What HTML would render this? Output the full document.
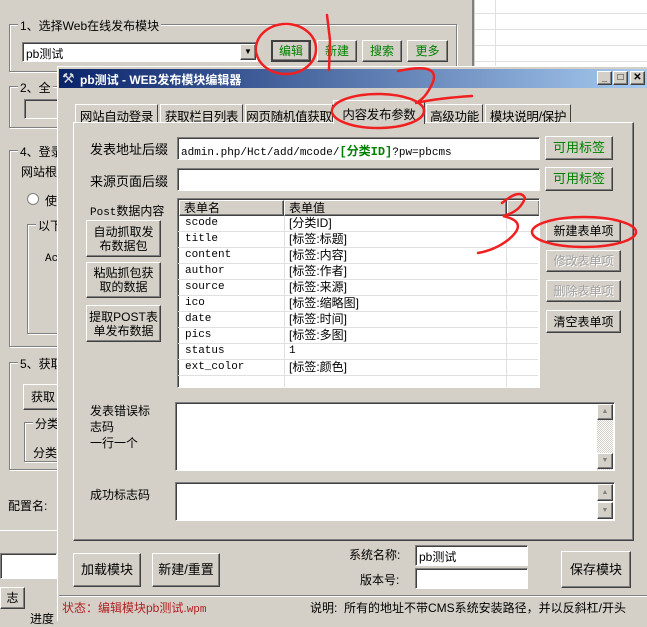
<!DOCTYPE html>
<html><head><meta charset="utf-8"><style>
*{box-sizing:border-box;margin:0;padding:0}
body{width:647px;height:621px;background:#d4d0c8;position:relative;overflow:hidden;font-family:"Liberation Sans","Noto Sans CJK SC","WenQuanYi Zen Hei",sans-serif;font-size:12px;color:#000}
.a{position:absolute;white-space:nowrap}
.gb{position:absolute;border:1px solid #808080;box-shadow:1px 1px 0 #fff, inset 1px 1px 0 #fff}
.gl{position:absolute;background:#d4d0c8;padding:0 2px;top:-8px;left:8px;font-size:12px;white-space:nowrap}
.btn{position:absolute;background:#d4d0c8;border:1px solid;border-color:#fff #404040 #404040 #fff;box-shadow:inset -1px -1px 0 #808080;text-align:center;display:flex;align-items:center;justify-content:center;line-height:14px;white-space:nowrap}
.inp{position:absolute;background:#fff;border:1px solid;border-color:#808080 #fff #fff #808080;box-shadow:inset 1px 1px 0 #404040}
.g{color:#008000}
.dis{color:#a0a0a0;text-shadow:1px 1px 0 #fff}
.mono{font-family:"Liberation Mono","Noto Sans CJK SC",monospace;font-size:11px}
.tab{position:absolute;top:104px;height:19px;border:1px solid;border-color:#fff #404040 transparent #fff;border-bottom:none;padding:1px 0 0;font-size:12.5px;white-space:nowrap;overflow:hidden;text-align:center;letter-spacing:-0.3px}
.row{position:absolute;left:0;width:360px;height:16px;border-bottom:1px solid #e0e0e0}
.row span{position:absolute;top:0;line-height:15px}
</style></head><body>
<!-- background window -->
<div class="a" style="left:475px;top:0;width:172px;height:75px;background:#fff"></div>
<div class="a" style="left:472px;top:0;width:2px;height:80px;background:#808080"></div>
<div class="a" style="left:495px;top:0;width:1px;height:75px;background:#e0e0e0"></div>
<div class="a" style="left:475px;top:13px;width:172px;height:1px;background:#e0e0e0"></div>
<div class="a" style="left:475px;top:29px;width:172px;height:1px;background:#e0e0e0"></div>
<div class="a" style="left:475px;top:45px;width:172px;height:1px;background:#e0e0e0"></div>
<div class="a" style="left:475px;top:61px;width:172px;height:1px;background:#e0e0e0"></div>
<div class="gb" style="left:9px;top:24px;width:448px;height:48px"><span class="gl">1、选择Web在线发布模块</span></div>
<div class="inp" style="left:22px;top:42px;width:236px;height:20px"><span class="a" style="left:3px;top:2px">pb测试</span><div class="btn" style="right:1px;top:1px;width:16px;height:16px;font-size:8px">▼</div></div>
<div class="btn g" style="left:271px;top:40px;width:40px;height:22px;border:2px solid #404040">编辑</div>
<div class="btn g" style="left:317px;top:40px;width:40px;height:22px">新建</div>
<div class="btn g" style="left:362px;top:40px;width:40px;height:22px">搜索</div>
<div class="btn g" style="left:407px;top:40px;width:41px;height:22px">更多</div>
<div class="gb" style="left:9px;top:86px;width:60px;height:42px"><span class="gl">2、全</span></div>
<div class="inp" style="left:24px;top:99px;width:40px;height:20px;background:#d4d0c8"></div>
<div class="gb" style="left:9px;top:150px;width:60px;height:197px"><span class="gl">4、登录</span></div>
<div class="a" style="left:21px;top:163px">网站根</div>
<div class="a" style="left:27px;top:193px;width:12px;height:12px;border-radius:50%;background:#fff;border:1px solid #808080"></div>
<div class="a" style="left:45px;top:192px">使</div>
<div class="gb" style="left:27px;top:224px;width:40px;height:110px"><span class="gl">以下</span></div>
<div class="a mono" style="left:45px;top:253px">Ac</div>
<div class="gb" style="left:9px;top:362px;width:60px;height:108px"><span class="gl">5、获取</span></div>
<div class="btn" style="left:23px;top:384px;width:40px;height:26px">获取</div>
<div class="gb" style="left:24px;top:422px;width:40px;height:40px"><span class="gl">分类</span></div>
<div class="a" style="left:33px;top:444px">分类</div>
<div class="a" style="left:8px;top:497px">配置名:</div>
<div class="a" style="left:0;top:530px;width:57px;height:1px;background:#fff"></div>
<div class="inp" style="left:0;top:553px;width:57px;height:26px"></div>
<div class="btn" style="left:0;top:587px;width:25px;height:22px">志</div>
<div class="a" style="left:30px;top:610px">进度</div>
<!-- dialog -->
<div class="a" style="left:57px;top:66px;width:590px;height:555px;background:#d4d0c8;border-left:1px solid #fff;border-top:1px solid #fff"></div>
<div class="a" style="left:59px;top:69px;width:588px;height:19px;background:linear-gradient(90deg,#0a246a,#a6caf0)"></div>
<div class="a" style="left:62px;top:70px;color:#ddd;font-size:14px">⚒</div>
<div class="a" style="left:80px;top:71px;color:#fff;font-weight:bold;font-size:12px">pb测试 - WEB发布模块编辑器</div>
<div class="btn" style="left:597px;top:71px;width:15px;height:14px;font-size:9px;font-weight:bold">_</div>
<div class="btn" style="left:613px;top:71px;width:15px;height:14px;font-size:10px">□</div>
<div class="btn" style="left:630px;top:71px;width:15px;height:14px;font-size:10px;font-weight:bold">✕</div>
<!-- tabs -->
<div class="tab" style="left:75px;width:83px">网站自动登录</div>
<div class="tab" style="left:160px;width:83px">获取栏目列表</div>
<div class="tab" style="left:245px;width:88px">网页随机值获取</div>
<div class="tab" style="left:426px;width:57px">高级功能</div>
<div class="tab" style="left:485px;width:86px">模块说明/保护</div>
<div class="a" style="left:73px;top:122px;width:561px;height:419px;border:1px solid;border-color:#fff #404040 #404040 #fff;box-shadow:inset -1px -1px 0 #808080"></div>
<div class="tab" style="left:333px;top:100px;width:92px;height:24px;background:#d4d0c8;padding-top:3px">内容发布参数</div>
<!-- panel content -->
<div class="a" style="left:90px;top:139px;font-size:13px">发表地址后缀</div>
<div class="inp" style="left:177px;top:137px;width:363px;height:23px"><span class="a mono" style="left:3px;top:4px">admin.php/Hct/add/mcode/<b class="g" style="font-size:12px">[分类ID]</b>?pw=pbcms</span></div>
<div class="btn g" style="left:545px;top:136px;width:68px;height:24px;font-size:13px">可用标签</div>
<div class="a" style="left:90px;top:171px;font-size:13px">来源页面后缀</div>
<div class="inp" style="left:177px;top:168px;width:363px;height:23px"></div>
<div class="btn g" style="left:545px;top:167px;width:68px;height:24px;font-size:13px">可用标签</div>
<div class="a" style="left:90px;top:202px"><span class="mono">Post</span>数据内容</div>
<div class="btn" style="left:86px;top:220px;width:75px;height:37px">自动抓取发<br>布数据包</div>
<div class="btn" style="left:86px;top:262px;width:75px;height:36px">粘贴抓包获<br>取的数据</div>
<div class="btn" style="left:86px;top:305px;width:75px;height:37px">提取POST表<br>单发布数据</div>
<div class="inp" style="left:177px;top:198px;width:363px;height:190px;overflow:hidden">
 <div class="a" style="left:1px;top:1px;width:360px;height:16px;background:#d4d0c8"></div>
 <div class="btn" style="left:1px;top:1px;width:105px;height:16px;justify-content:flex-start;padding-left:4px">表单名</div>
 <div class="btn" style="left:106px;top:1px;width:223px;height:16px;justify-content:flex-start;padding-left:4px">表单值</div>
 <div class="btn" style="left:329px;top:1px;width:33px;height:16px"></div>
 <div class="a" style="left:106px;top:17px;width:1px;height:175px;background:#e0e0e0"></div>
 <div class="a" style="left:328px;top:17px;width:1px;height:175px;background:#e0e0e0"></div>
 <div class="a" style="left:0;top:17px;width:360px">
  <div class="row" style="top:0"><span class="mono" style="left:7px">scode</span><span style="left:111px">[分类ID]</span></div>
  <div class="row" style="top:16px"><span class="mono" style="left:7px">title</span><span style="left:111px">[标签:标题]</span></div>
  <div class="row" style="top:32px"><span class="mono" style="left:7px">content</span><span style="left:111px">[标签:内容]</span></div>
  <div class="row" style="top:48px"><span class="mono" style="left:7px">author</span><span style="left:111px">[标签:作者]</span></div>
  <div class="row" style="top:64px"><span class="mono" style="left:7px">source</span><span style="left:111px">[标签:来源]</span></div>
  <div class="row" style="top:80px"><span class="mono" style="left:7px">ico</span><span style="left:111px">[标签:缩略图]</span></div>
  <div class="row" style="top:96px"><span class="mono" style="left:7px">date</span><span style="left:111px">[标签:时间]</span></div>
  <div class="row" style="top:112px"><span class="mono" style="left:7px">pics</span><span style="left:111px">[标签:多图]</span></div>
  <div class="row" style="top:128px"><span class="mono" style="left:7px">status</span><span class="mono" style="left:111px">1</span></div>
  <div class="row" style="top:144px"><span class="mono" style="left:7px">ext_color</span><span style="left:111px">[标签:颜色]</span></div>
 </div>
</div>
<div class="btn" style="left:546px;top:220px;width:75px;height:22px">新建表单项</div>
<div class="btn dis" style="left:546px;top:250px;width:75px;height:22px">修改表单项</div>
<div class="btn dis" style="left:546px;top:280px;width:75px;height:22px">删除表单项</div>
<div class="btn" style="left:546px;top:310px;width:75px;height:23px">清空表单项</div>
<div class="a" style="left:90px;top:403px;line-height:16px;white-space:normal;width:70px">发表错误标<br>志码<br>一行一个</div>
<div class="inp" style="left:175px;top:402px;width:440px;height:69px">
 <div class="a" style="right:1px;top:1px;width:16px;height:66px;background:repeating-conic-gradient(#d4d0c8 0 25%,#fff 0 50%) 0 0/2px 2px"></div>
 <div class="btn" style="right:1px;top:1px;width:16px;height:16px;font-size:7px;color:#808080">▲</div>
 <div class="btn" style="right:1px;bottom:1px;width:16px;height:16px;font-size:7px;color:#808080">▼</div>
</div>
<div class="a" style="left:90px;top:486px">成功标志码</div>
<div class="inp" style="left:175px;top:482px;width:440px;height:39px">
 <div class="btn" style="right:1px;top:1px;width:16px;height:17px;font-size:7px;color:#808080">▲</div>
 <div class="btn" style="right:1px;bottom:1px;width:16px;height:17px;font-size:7px;color:#808080">▼</div>
</div>
<div class="btn" style="left:73px;top:553px;width:68px;height:34px;font-size:13px">加载模块</div>
<div class="btn" style="left:152px;top:553px;width:68px;height:34px;font-size:13px">新建/重置</div>
<div class="a" style="left:349px;top:546px">系统名称:</div>
<div class="inp" style="left:415px;top:545px;width:113px;height:21px"><span class="a" style="left:3px;top:2px">pb测试</span></div>
<div class="a" style="left:360px;top:571px">版本号:</div>
<div class="inp" style="left:415px;top:568px;width:113px;height:21px"></div>
<div class="btn" style="left:561px;top:551px;width:70px;height:37px;font-size:13px">保存模块</div>
<div class="a" style="left:59px;top:595px;width:588px;height:1px;background:#808080"></div>
<div class="a" style="left:59px;top:596px;width:588px;height:1px;background:#fff"></div>
<div class="a" style="left:62px;top:599px;color:#b22222">状态：编辑模块pb测试.<span class="mono">wpm</span></div>
<div class="a" style="left:310px;top:599px">说明:&nbsp; 所有的地址不带CMS系统安装路径，并以反斜杠/开头</div>
<!-- red annotations -->
<svg class="a" style="left:0;top:0" width="647" height="621" fill="none" stroke="#f02020" stroke-width="2.5" stroke-linecap="round">
<ellipse cx="286" cy="49" rx="30" ry="25"/>
<path d="M327 15 L330 40 L329 70"/>
<path d="M398 71 Q440 62 433 82 Q425 100 415 103 Q440 98 472 96"/>
<ellipse cx="378" cy="111" rx="46" ry="17"/>
<path d="M502 203 Q520 188 525 198 Q520 212 503 216 Q530 222 508 240 Q495 250 478 253"/>
<ellipse cx="584" cy="232" rx="52" ry="15"/>
</svg>
</body></html>
